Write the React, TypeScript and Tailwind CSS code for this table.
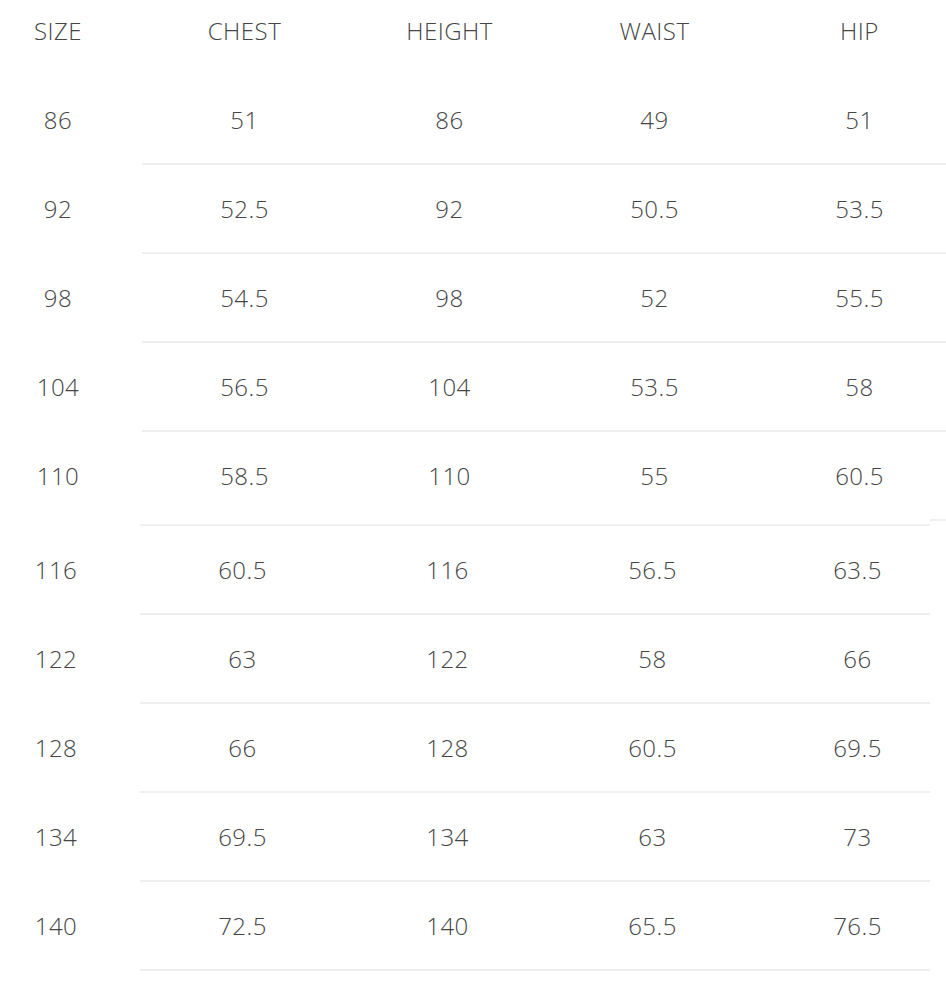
import React from "react";

const top = [
  ["86", "51", "86", "49", "51"],
  ["92", "52.5", "92", "50.5", "53.5"],
  ["98", "54.5", "98", "52", "55.5"],
  ["104", "56.5", "104", "53.5", "58"],
  ["110", "58.5", "110", "55", "60.5"],
];
const bottom = [
  ["116", "60.5", "116", "56.5", "63.5"],
  ["122", "63", "122", "58", "66"],
  ["128", "66", "128", "60.5", "69.5"],
  ["134", "69.5", "134", "63", "73"],
  ["140", "72.5", "140", "65.5", "76.5"],
];

const font = { fontFamily: '"Open Sans", "Noto Sans", sans-serif' };

export default function App() {
  return (
    <div
      className="w-[946px] h-[1003px] bg-white text-[#454545] text-[24px] font-light tracking-[0.02em] overflow-hidden"
      style={font}
    >
      {/* header */}
      <div className="flex h-[76px] pt-[18px] leading-[26px]">
        <div className="w-[116px] shrink-0 text-center">SIZE</div>
        <div className="w-[26px] shrink-0" />
        {["CHEST", "HEIGHT", "WAIST", "HIP"].map((h) => (
          <div key={h} className="w-[205px] shrink-0 text-center">
            {h}
          </div>
        ))}
      </div>
      {/* top section */}
      {top.map((r, i) => (
        <div key={r[0]} className="flex h-[89px]">
          <div className="w-[116px] shrink-0 flex items-center justify-center pb-[2px]">
            {r[0]}
          </div>
          <div className="w-[26px] shrink-0" />
          <div
            className={
              i < top.length - 1
                ? "w-[804px] shrink-0 flex border-b-2 border-[#efefef]"
                : "w-[804px] shrink-0 flex flex-col"
            }
          >
            <div className="flex flex-1">
              {r.slice(1).map((c, j) => (
                <div key={j} className="w-[205px] shrink-0 flex items-center justify-center">
                  {c}
                </div>
              ))}
            </div>
            {i === top.length - 1 && (
              <div className="ml-[788px] w-[16px] h-[2px] bg-[#efefef]" />
            )}
          </div>
        </div>
      ))}
      {/* bottom section */}
      <div className="mt-[3px] ml-[140px] w-[790px] h-[2px] bg-[#efefef]" />
      {bottom.map((r) => (
        <div key={r[0]} className="flex h-[89px]">
          <div className="w-[112px] shrink-0 flex items-center justify-center pb-[2px]">
            {r[0]}
          </div>
          <div className="w-[28px] shrink-0" />
          <div className="w-[790px] shrink-0 flex border-b-2 border-[#efefef]">
            {r.slice(1).map((c, j) => (
              <div key={j} className="w-[205px] shrink-0 flex items-center justify-center">
                {c}
              </div>
            ))}
          </div>
        </div>
      ))}
    </div>
  );
}
